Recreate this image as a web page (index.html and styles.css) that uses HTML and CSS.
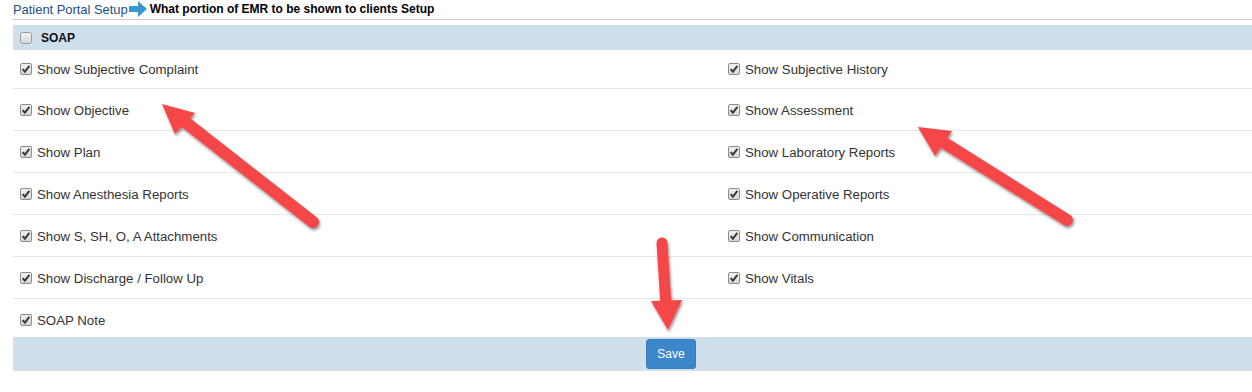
FILE: index.html
```html
<!DOCTYPE html>
<html lang="en">

<head>
    <meta charset="UTF-8">
    <meta name="viewport" content="width=device-width, initial-scale=1.0">
    <title>Patient Portal Setup</title>
    <link rel="stylesheet" href="styles.css">
</head>

<body>
    <svg width="0" height="0" class="defs">
        <defs>
            <linearGradient id="boxFill" x1="0" y1="0" x2="0" y2="1">
                <stop offset="0" stop-color="#f2f2f2" />
                <stop offset="1" stop-color="#d6d6d6" />
            </linearGradient>
            <symbol id="chk" viewBox="0 0 12 12">
                <rect x="0.5" y="0.5" width="11" height="11" rx="1.5" fill="url(#boxFill)" stroke="#8c8c8c" />
                <path d="M2.6 6.1 L4.9 8.6 L9.4 2.9" fill="none" stroke="#3a3a3a" stroke-width="2" />
            </symbol>
            <symbol id="box" viewBox="0 0 12 12">
                <rect x="0.5" y="0.5" width="11" height="11" rx="2" fill="url(#boxFill)" stroke="#9a9a9a" />
            </symbol>
        </defs>
    </svg>

    <div class="page">
        <div class="crumbs">
            <a class="crumb-link">Patient Portal Setup</a>
            <svg class="crumb-arrow" width="19" height="16" viewBox="0 0 19 16">
                <rect x="0" y="5" width="10" height="6" fill="#3b97d3" />
                <path d="M9 0 L18 8 L9 16 Z" fill="#3b97d3" />
            </svg>
            <span class="crumb-current">What portion of EMR to be shown to clients Setup</span>
        </div>

        <div class="section-head">
            <svg class="cb"><use href="#box" /></svg>
            <span>SOAP</span>
        </div>

        <div class="rows">
            <div class="row">
                <label class="item"><svg class="cb"><use href="#chk" /></svg>Show Subjective Complaint</label>
                <label class="item"><svg class="cb"><use href="#chk" /></svg>Show Subjective History</label>
            </div>
            <div class="row">
                <label class="item"><svg class="cb"><use href="#chk" /></svg>Show Objective</label>
                <label class="item"><svg class="cb"><use href="#chk" /></svg>Show Assessment</label>
            </div>
            <div class="row">
                <label class="item"><svg class="cb"><use href="#chk" /></svg>Show Plan</label>
                <label class="item"><svg class="cb"><use href="#chk" /></svg>Show Laboratory Reports</label>
            </div>
            <div class="row">
                <label class="item"><svg class="cb"><use href="#chk" /></svg>Show Anesthesia Reports</label>
                <label class="item"><svg class="cb"><use href="#chk" /></svg>Show Operative Reports</label>
            </div>
            <div class="row">
                <label class="item"><svg class="cb"><use href="#chk" /></svg>Show S, SH, O, A Attachments</label>
                <label class="item"><svg class="cb"><use href="#chk" /></svg>Show Communication</label>
            </div>
            <div class="row">
                <label class="item"><svg class="cb"><use href="#chk" /></svg>Show Discharge / Follow Up</label>
                <label class="item"><svg class="cb"><use href="#chk" /></svg>Show Vitals</label>
            </div>
            <div class="row">
                <label class="item"><svg class="cb"><use href="#chk" /></svg>SOAP Note</label>
            </div>
        </div>

        <div class="footer">
            <button type="button" class="save-button">Save</button>
        </div>

        <!-- annotation arrows drawn over the screenshot -->
        <svg class="marks" width="1252" height="392" viewBox="0 0 1252 392">
            <defs>
                <filter id="shade" x="-20%" y="-20%" width="140%" height="140%">
                    <feDropShadow dx="1" dy="2" stdDeviation="1.6" flood-color="#000" flood-opacity="0.45" />
                </filter>
            </defs>
            <g fill="#f54646" stroke="#f54646" filter="url(#shade)">
                <line x1="313" y1="222" x2="180" y2="118" stroke-width="12" stroke-linecap="round" />
                <path d="M162 104 L195 113 L175 134 Z" stroke="none" />

                <line x1="1067" y1="220" x2="935" y2="137" stroke-width="12" stroke-linecap="round" />
                <path d="M918 127 L952 131 L935 156 Z" stroke="none" />

                <line x1="662" y1="243" x2="666" y2="305" stroke-width="11" stroke-linecap="round" />
                <path d="M668 330 L651 301 L682 300 Z" stroke="none" />
            </g>
        </svg>
    </div>
</body>

</html>
```

FILE: styles.css
```css
:root {
    --bar-color: #cfdfec;
    --link-color: #1d4f88;
    --text-color: #333333;
    --rule-color: #e6e6e6;
    --button-color: #3c87c9;
}

* {
    margin: 0;
    padding: 0;
    box-sizing: border-box;
}

body {
    font-family: "Liberation Sans", Arial, sans-serif;
    font-size: 13.25px;
    color: var(--text-color);
    background-color: #ffffff;
}

.defs {
    position: absolute;
}

.page {
    position: relative;
    padding-left: 13px;
}

.crumbs {
    display: flex;
    align-items: center;
    height: 20px;
    padding-bottom: 1px;
    border-bottom: 1px solid #cccccc;
    font-size: 12px;
}

.crumb-link {
    color: var(--link-color);
    font-size: 13px;
    letter-spacing: -0.05px;
}

.crumb-arrow {
    margin: 0 2px 0 1px;
}

.crumb-current {
    color: #000000;
    font-weight: bold;
}

.section-head {
    display: flex;
    align-items: center;
    gap: 9px;
    height: 25px;
    margin-top: 5px;
    padding-left: 7px;
    background-color: var(--bar-color);
    font-size: 12px;
    font-weight: bold;
    color: #111111;
}

.cb {
    width: 12px;
    height: 12px;
    flex-shrink: 0;
}

.row {
    display: grid;
    grid-template-columns: 708px 1fr;
    border-top: 1px solid var(--rule-color);
    padding: 12px 0 9px;
    line-height: 20px;
}

.row:first-child {
    border-top: none;
    padding: 10px 0 8px;
}

.row:last-child {
    padding-bottom: 6px;
}

.item {
    display: flex;
    align-items: center;
    gap: 5px;
    padding-left: 7px;
}

.item .cb {
    margin-top: -2px;
}

/* the save button sits on the centre of the wider original table */
.footer {
    display: flex;
    justify-content: center;
    height: 34px;
    padding: 2px 0 0 77px;
    background-color: var(--bar-color);
}

.save-button {
    width: 50px;
    height: 30px;
    background-color: var(--button-color);
    border: 1px solid #3a7fbd;
    border-radius: 3px;
    color: #ffffff;
    font-family: inherit;
    font-size: 12px;
    cursor: pointer;
}

.marks {
    position: absolute;
    top: 0;
    left: 0;
    pointer-events: none;
}
```
